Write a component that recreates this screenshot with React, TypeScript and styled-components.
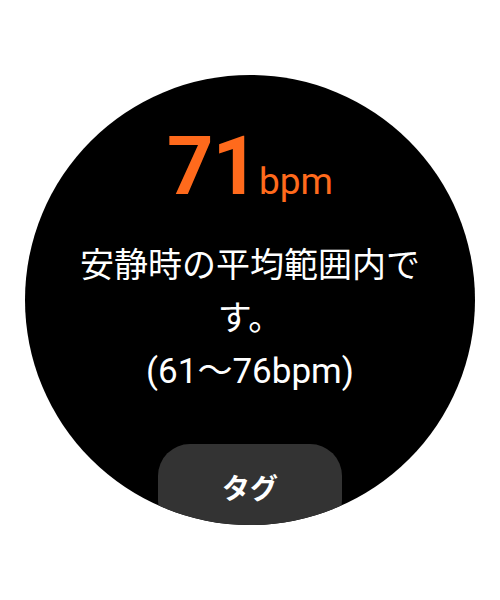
import React from "react";
import styled, { createGlobalStyle } from "styled-components";

const colours = {
  page: "#ffffff",
  face: "#000000",
  accent: "#ff6a1c",
  text: "#ffffff",
  chip: "#333333",
};

const GlobalStyle = createGlobalStyle`
  html, body {
    margin: 0;
    padding: 0;
    background: ${colours.page};
  }
`;

const Screen = styled.div`
  width: 500px;
  height: 600px;
  display: flex;
  align-items: center;
  justify-content: center;
`;

const WatchFace = styled.div`
  width: 450px;
  height: 450px;
  border-radius: 50%;
  background: ${colours.face};
  overflow: hidden;
  display: flex;
  flex-direction: column;
  align-items: center;
  padding-top: 51px;
  box-sizing: border-box;
  font-family: Roboto, "Noto Sans CJK JP", sans-serif;
`;

const Reading = styled.div`
  display: flex;
  align-items: baseline;
  gap: 1px;
  color: ${colours.accent};
  line-height: 1;
`;

const Value = styled.span`
  font-size: 81px;
  font-weight: 700;
  letter-spacing: -1px;
`;

const Unit = styled.span`
  font-size: 37px;
`;

const Message = styled.p`
  margin: 32px 0 0;
  max-width: 350px;
  color: ${colours.text};
  font-family: Roboto, "Noto Sans CJK JP", sans-serif;
  font-size: 34px;
  line-height: 53px;
  text-align: center;
`;

const Range = styled.span`
  display: block;
  font-size: 35px;
`;

const TagButton = styled.button`
  margin-top: auto;
  width: 184px;
  height: 88px;
  flex-shrink: 0;
  border: none;
  border-radius: 32px;
  background: ${colours.chip};
  color: ${colours.text};
  font-family: "Noto Sans CJK JP", sans-serif;
  font-size: 28px;
  font-weight: 700;
  padding: 0 0 2px;
  transform: translateY(7px);
`;

export default function App() {
  return (
    <>
      <GlobalStyle />
      <Screen>
        <WatchFace>
          <Reading>
            <Value>71</Value>
            <Unit>bpm</Unit>
          </Reading>
          <Message>
            安静時の平均範囲内です。
            <Range>(61～76bpm)</Range>
          </Message>
          <TagButton>タグ</TagButton>
        </WatchFace>
      </Screen>
    </>
  );
}
